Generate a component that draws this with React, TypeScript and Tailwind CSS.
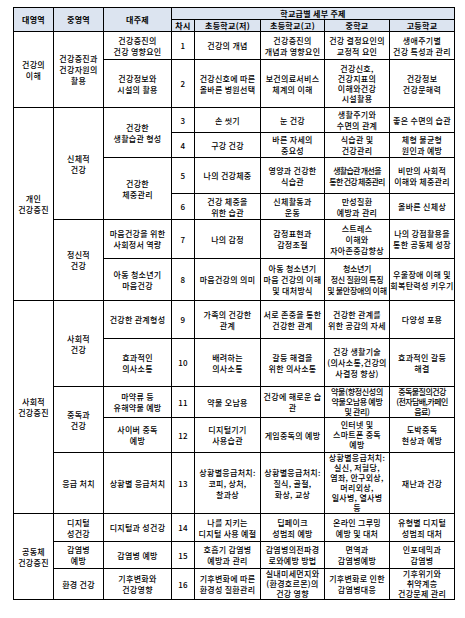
import React from "react";

type Cell = { t: string; rs?: number; cs?: number; cls?: string };

const rows: { h: string; cells: Cell[] }[] = [
  {
    h: "h-[28px]",
    cells: [
      { t: "건강의\n이해", rs: 2 },
      { t: "건강증진과\n건강자원의\n활용", rs: 2 },
      { t: "건강증진의\n건강 영향요인" },
      { t: "1" },
      { t: "건강의 개념" },
      { t: "건강증진의\n개념과 영향요인" },
      { t: "건강 결정요인의\n교정적 요인" },
      { t: "생애주기별\n건강 특성과 관리" },
    ],
  },
  {
    h: "h-[48px]",
    cells: [
      { t: "건강정보와\n시설의 활용" },
      { t: "2" },
      { t: "건강신호에 따른\n올바른 병원선택" },
      { t: "보건의료서비스\n체계의 이해" },
      { t: "건강신호,\n건강지표의\n이해와건강\n시설활용", cls: "leading-[10px]" },
      { t: "건강정보\n건강문해력" },
    ],
  },
  {
    h: "h-[25px]",
    cells: [
      { t: "개인\n건강증진", rs: 6 },
      { t: "신체적\n건강", rs: 4 },
      { t: "건강한\n생활습관 형성", rs: 2 },
      { t: "3" },
      { t: "손 씻기" },
      { t: "눈 건강" },
      { t: "생활주기와\n수면의 관계" },
      { t: "좋은 수면의 습관" },
    ],
  },
  {
    h: "h-[25px]",
    cells: [
      { t: "4" },
      { t: "구강 건강" },
      { t: "바른 자세의\n중요성" },
      { t: "식습관 및\n건강관리" },
      { t: "체형 불균형\n원인과 예방" },
    ],
  },
  {
    h: "h-[36px]",
    cells: [
      { t: "건강한\n체중관리", rs: 2 },
      { t: "5" },
      { t: "나의 건강체중" },
      { t: "영양과 건강한\n식습관" },
      { t: "생활습관 개선을\n통한 건강 체중관리", cls: "whitespace-pre tracking-[-0.7px]" },
      { t: "비만의 사회적\n이해와 체중관리" },
    ],
  },
  {
    h: "h-[26px]",
    cells: [
      { t: "6" },
      { t: "건강 체중을\n위한 습관" },
      { t: "신체활동과\n운동" },
      { t: "만성질환\n예방과 관리" },
      { t: "올바른 신체상" },
    ],
  },
  {
    h: "h-[39px]",
    cells: [
      { t: "정신적\n건강", rs: 2 },
      { t: "마음건강을 위한\n사회정서 역량" },
      { t: "7" },
      { t: "나의 감정" },
      { t: "감정표현과\n감정조절" },
      { t: "스트레스\n이해와\n자아존중감향상" },
      { t: "나의 강점활용을\n통한 공동체 성장" },
    ],
  },
  {
    h: "h-[42px]",
    cells: [
      { t: "아동 청소년기\n마음건강" },
      { t: "8" },
      { t: "마음건강의 의미" },
      { t: "아동 청소년기\n마음 건강의 이해\n및 대처방식" },
      { t: "청소년기\n정신 질환의 특징\n및 불안장애의 이해", cls: "whitespace-pre tracking-[-0.3px]" },
      { t: "우울장애 이해 및\n회복탄력성 키우기" },
    ],
  },
  {
    h: "h-[38px]",
    cells: [
      { t: "사회적\n건강증진", rs: 5 },
      { t: "사회적\n건강", rs: 2 },
      { t: "건강한 관계형성" },
      { t: "9" },
      { t: "가족의 건강한\n관계" },
      { t: "서로 존중을 통한\n건강한 관계" },
      { t: "건강한 관계를\n위한 공감의 자세" },
      { t: "다양성 포용" },
    ],
  },
  {
    h: "h-[48px]",
    cells: [
      { t: "효과적인\n의사소통" },
      { t: "10" },
      { t: "배려하는\n의사소통" },
      { t: "갈등 해결을\n위한 의사소통" },
      { t: "건강 생활기술\n(의사소통,건강의\n사결정 향상)" },
      { t: "효과적인 갈등\n해결" },
    ],
  },
  {
    h: "h-[31px]",
    cells: [
      { t: "중독과\n건강", rs: 2 },
      { t: "마약류 등\n유해약물 예방" },
      { t: "11" },
      { t: "약물 오남용" },
      { t: "건강에 해로운 습관", cls: "whitespace-nowrap overflow-hidden" },
      { t: "약물(향정신성의\n약물오남용 예방\n및 관리)", cls: "leading-[10px] whitespace-pre tracking-[-0.3px]" },
      { t: "중독물질의건강\n(전자담배,카페인\n음료)", cls: "leading-[10px] whitespace-pre tracking-[-0.6px]" },
    ],
  },
  {
    h: "h-[35px]",
    cells: [
      { t: "사이버 중독\n예방" },
      { t: "12" },
      { t: "디지털기기\n사용습관" },
      { t: "게임중독의 예방" },
      { t: "인터넷 및\n스마트폰 중독\n예방", cls: "leading-[10px]" },
      { t: "도박중독\n현상과 예방" },
    ],
  },
  {
    h: "h-[61px]",
    cells: [
      { t: "응급 처치" },
      { t: "상황별 응급처치" },
      { t: "13" },
      { t: "상황별응급처치:\n코피, 상처,\n찰과상" },
      { t: "상황별응급처치:\n질식, 골절,\n화상, 교상" },
      { t: "상황별응급처치:\n실신, 저혈당,\n염좌, 안구외상,\n머리외상,\n일사병, 열사병\n등", cls: "leading-[10px]" },
      { t: "재난과 건강" },
    ],
  },
  {
    h: "h-[28px]",
    cells: [
      { t: "공동체\n건강증진", rs: 3 },
      { t: "디지털\n성건강" },
      { t: "디지털과 성건강" },
      { t: "14" },
      { t: "나를 지키는\n디지털 사용 예절" },
      { t: "딥페이크\n성범죄 예방" },
      { t: "온라인 그루밍\n예방 및 대처" },
      { t: "유형별 디지털\n성범죄 대처" },
    ],
  },
  {
    h: "h-[27px]",
    cells: [
      { t: "감염병\n예방" },
      { t: "감염병 예방" },
      { t: "15" },
      { t: "호흡기 감염병\n예방과 관리" },
      { t: "감염병의전파경\n로와예방 방법" },
      { t: "면역과\n감염병예방" },
      { t: "인포데믹과\n감염병" },
    ],
  },
  {
    h: "h-[29px]",
    cells: [
      { t: "환경 건강" },
      { t: "기후변화와\n건강영향" },
      { t: "16" },
      { t: "기후변화에 따른\n환경성 질환관리" },
      { t: "실내미세먼지와\n(환경호르몬)의\n건강 영향", cls: "leading-[10px]" },
      { t: "기후변화로 인한\n감염병대응" },
      { t: "기후위기와\n취약계층\n건강문제 관리", cls: "leading-[10px]" },
    ],
  },
];

const td = "border border-black p-0 text-center align-middle whitespace-pre-line";
const th = "border border-black p-0 text-center align-middle bg-[#dce4f0] font-bold";

export default function App() {
  return (
    <div className="min-h-screen bg-white pt-[7px] pl-[13px] text-black text-[8px] leading-[11px] tracking-[0.3px] font-medium font-['Noto_Sans_CJK_KR','Noto_Sans',sans-serif]">
      <table className="table-fixed border-collapse w-[441px]">
        <colgroup>
          <col className="w-[40px]" />
          <col className="w-[50px]" />
          <col className="w-[68px]" />
          <col className="w-[23px]" />
          <col className="w-[66px]" />
          <col className="w-[64px]" />
          <col className="w-[65px]" />
          <col className="w-[65px]" />
        </colgroup>
        <thead>
          <tr className="h-[12px]">
            <th rowSpan={2} className={th}>대영역</th>
            <th rowSpan={2} className={th}>중영역</th>
            <th rowSpan={2} className={th}>대주제</th>
            <th colSpan={5} className={th}>학교급별 세부 주제</th>
          </tr>
          <tr className="h-[12px]">
            <th className={th}>차시</th>
            <th className={th}>초등학교(저)</th>
            <th className={th}>초등학교(고)</th>
            <th className={th}>중학교</th>
            <th className={th}>고등학교</th>
          </tr>
        </thead>
        <tbody>
          {rows.map((r, i) => (
            <tr key={i} className={r.h}>
              {r.cells.map((c, j) => (
                <td key={j} rowSpan={c.rs} colSpan={c.cs} className={`${td} ${c.cls ?? ""}`}>
                  {c.t}
                </td>
              ))}
            </tr>
          ))}
        </tbody>
      </table>
    </div>
  );
}
